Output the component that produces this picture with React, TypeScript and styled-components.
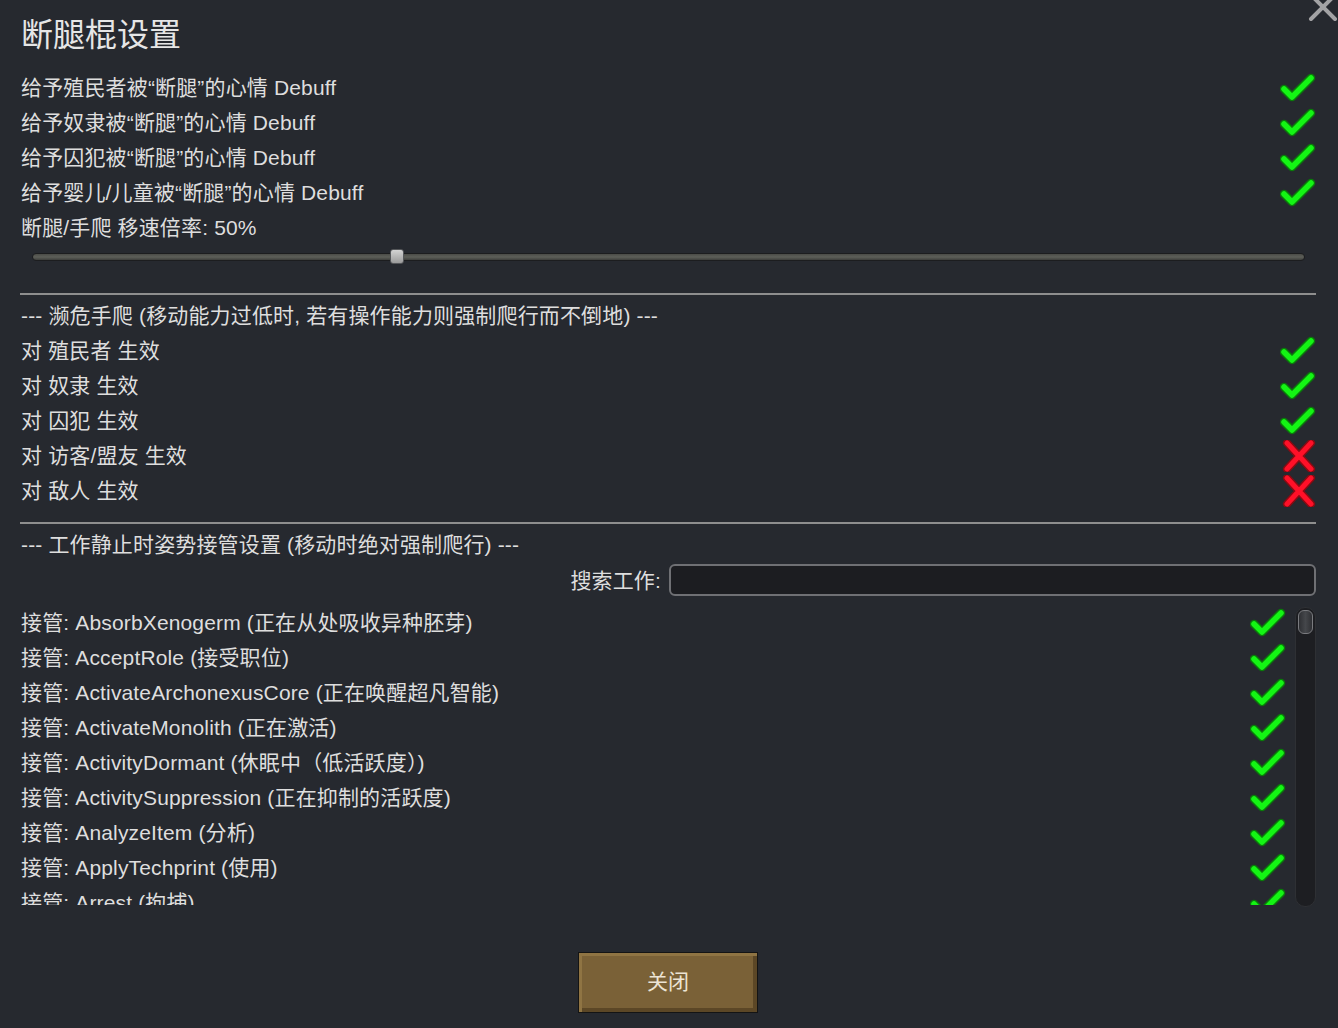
import React from "react";
import styled, { createGlobalStyle } from "styled-components";

const GlobalStyle = createGlobalStyle`
  html, body {
    margin: 0;
    padding: 0;
    background: #26292f;
  }
  body {
    font-family: "Liberation Sans", "Noto Sans CJK SC", sans-serif;
    color: #dedede;
  }
`;

const Window = styled.div`
  position: relative;
  width: 1338px;
  height: 1028px;
  box-sizing: border-box;
  padding: 10px 22px 0 20px;
  background: #26292f;
  overflow: hidden;
  display: flex;
  flex-direction: column;
`;

const CloseCorner = styled.svg`
  position: absolute;
  top: -8px;
  left: 1308px;
  width: 30px;
  height: 30px;
`;

const Title = styled.div`
  font-size: 32px;
  line-height: 50px;
  height: 50px;
  padding-left: 1px;
  color: #e6e6e6;
  margin-bottom: 10px;
`;

const Row = styled.div<{ $inset?: number }>`
  height: 35px;
  display: flex;
  align-items: center;
  justify-content: space-between;
  font-size: 21px;
  letter-spacing: 0.15px;
  padding-left: 1px;
  padding-right: ${(p) => p.$inset ?? 0}px;
  white-space: nowrap;
  & > span {
    margin-bottom: 4px;
  }
`;

const SliderBlock = styled.div`
  height: 24px;
  display: flex;
  align-items: center;
  padding: 0 11px 0 12px;
`;

const Track = styled.div`
  position: relative;
  flex: 1;
  height: 6px;
  border-radius: 4px;
  background: linear-gradient(#4a4b47, #5d5f59 50%, #3e3f3c);
  border: 1px solid #1c1d1f;
`;

const Thumb = styled.div<{ $pos: number }>`
  position: absolute;
  top: -5px;
  left: ${(p) => p.$pos}%;
  width: 14px;
  height: 15px;
  margin-left: -7px;
  border-radius: 3px;
  background: linear-gradient(#d4d4d4, #9a9a9a);
  border: 1px solid #55575a;
  box-sizing: border-box;
`;

const Divider = styled.div<{ $top: number; $bottom: number }>`
  height: 2px;
  background: #8e8e8e;
  margin: ${(p) => p.$top}px 0 ${(p) => p.$bottom}px;
`;

const SearchRow = styled.div`
  height: 35px;
  display: flex;
  align-items: center;
  justify-content: flex-end;
  gap: 8px;
  font-size: 21px;
  letter-spacing: 0.15px;
  & > span {
    margin-bottom: 2px;
  }
`;

const SearchInput = styled.input`
  width: 647px;
  height: 32px;
  box-sizing: border-box;
  border: 2px solid #6f7074;
  border-radius: 6px;
  background: #1c1d21;
  color: #ddd;
  font-size: 18px;
  outline: none;
`;

const ListArea = styled.div`
  margin-top: 8px;
  height: 300px;
  display: flex;
  gap: 9px;
`;

const ListViewport = styled.div`
  flex: 1;
  height: 300px;
  overflow: hidden;
`;

const ScrollBar = styled.div`
  width: 21px;
  height: 300px;
  margin-top: 2px;
  box-sizing: border-box;
  border-radius: 10px;
  background: #1d1e22;
  border: 1px solid #2e3034;
  padding: 2px;
`;

const ScrollThumb = styled.div`
  height: 24px;
  border-radius: 6px;
  background: linear-gradient(90deg, #2f3034, #45474b 50%, #2f3034);
  border: 1px solid #7a7b7f;
  box-sizing: border-box;
`;

const Footer = styled.div`
  margin-top: 47px;
  display: flex;
  justify-content: center;
`;

const CloseButton = styled.button`
  width: 180px;
  height: 61px;
  box-sizing: border-box;
  padding: 0 0 5px;
  border: 1px solid #141414;
  box-shadow: inset 3px 3px 0 #8f7443, inset -4px -4px 0 #5c4726;
  background: #7a6137;
  color: #ece4d4;
  font-family: "Liberation Sans", "Noto Sans CJK SC", sans-serif;
  font-size: 21px;
  cursor: pointer;
`;

const IconBox = styled.svg`
  width: 36px;
  height: 32px;
  flex-shrink: 0;
`;

const Check = () => (
  <IconBox viewBox="0 0 36 32">
    <polyline
      points="4,17 12,25 31,6"
      fill="none"
      stroke="#0a7a0a"
      strokeWidth="8.5"
      strokeLinecap="round"
      strokeLinejoin="round"
    />
    <polyline
      points="4,17 12,25 31,6"
      fill="none"
      stroke="#14f514"
      strokeWidth="5.5"
      strokeLinecap="round"
      strokeLinejoin="round"
    />
  </IconBox>
);

const Cross = () => (
  <IconBox viewBox="0 0 36 32">
    <path d="M7,3 L31,29 M31,3 L7,29" stroke="#8a0a12" strokeWidth="8" strokeLinecap="round" />
    <path d="M7,3 L31,29 M31,3 L7,29" stroke="#ff1028" strokeWidth="5" strokeLinecap="round" />
  </IconBox>
);

const moodRows = [
  "给予殖民者被“断腿”的心情 Debuff",
  "给予奴隶被“断腿”的心情 Debuff",
  "给予囚犯被“断腿”的心情 Debuff",
  "给予婴儿/儿童被“断腿”的心情 Debuff",
];

const crawlRows: [string, boolean][] = [
  ["对 殖民者 生效", true],
  ["对 奴隶 生效", true],
  ["对 囚犯 生效", true],
  ["对 访客/盟友 生效", false],
  ["对 敌人 生效", false],
];

const jobs = [
  "AbsorbXenogerm (正在从处吸收异种胚芽)",
  "AcceptRole (接受职位)",
  "ActivateArchonexusCore (正在唤醒超凡智能)",
  "ActivateMonolith (正在激活)",
  "ActivityDormant (休眠中（低活跃度）)",
  "ActivitySuppression (正在抑制的活跃度)",
  "AnalyzeItem (分析)",
  "ApplyTechprint (使用)",
  "Arrest (拘捕)",
];

export default function App() {
  return (
    <>
      <GlobalStyle />
      <Window>
        <CloseCorner viewBox="0 0 30 30">
          <path d="M3,3 L27,27 M27,3 L3,27" stroke="#a3a3a5" strokeWidth="4" strokeLinecap="round" />
        </CloseCorner>
        <Title>断腿棍设置</Title>
        {moodRows.map((t) => (
          <Row key={t}>
            <span>{t}</span>
            <Check />
          </Row>
        ))}
        <Row>
          <span>断腿/手爬 移速倍率: 50%</span>
        </Row>
        <SliderBlock>
          <Track>
            <Thumb $pos={28.6} />
          </Track>
        </SliderBlock>
        <Divider $top={24} $bottom={3} />
        <Row>
          <span>--- 濒危手爬 (移动能力过低时, 若有操作能力则强制爬行而不倒地) ---</span>
        </Row>
        {crawlRows.map(([t, on]) => (
          <Row key={t}>
            <span>{t}</span>
            {on ? <Check /> : <Cross />}
          </Row>
        ))}
        <Divider $top={14} $bottom={3} />
        <Row>
          <span>--- 工作静止时姿势接管设置 (移动时绝对强制爬行) ---</span>
        </Row>
        <SearchRow>
          <span>搜索工作:</span>
          <SearchInput />
        </SearchRow>
        <ListArea>
          <ListViewport>
            {jobs.map((j) => (
              <Row key={j} $inset={0}>
                <span>接管: {j}</span>
                <Check />
              </Row>
            ))}
          </ListViewport>
          <ScrollBar>
            <ScrollThumb />
          </ScrollBar>
        </ListArea>
        <Footer>
          <CloseButton>关闭</CloseButton>
        </Footer>
      </Window>
    </>
  );
}
